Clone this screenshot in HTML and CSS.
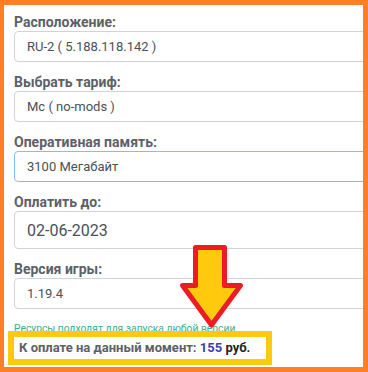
FILE: index.html
```html
<!DOCTYPE html>
<html>
<head>
  <title>Аренда сервера</title>
  <link rel="stylesheet" href="styles.css">
</head>
<body>
  <div class="frame">
    <!-- Server order form -->
    <div class="field">
      <label class="field-label">Расположение:</label>
      <input class="field-input" type="text" value="RU-2 ( 5.188.118.142 )" readonly>
    </div>

    <div class="field">
      <label class="field-label">Выбрать тариф:</label>
      <input class="field-input" type="text" value="Mc ( no-mods )" readonly>
    </div>

    <div class="field">
      <label class="field-label">Оперативная память:</label>
      <input class="field-input focused" type="text" value="3100 Мегабайт" readonly>
    </div>

    <div class="field">
      <label class="field-label">Оплатить до:</label>
      <input class="field-input large" type="text" value="02-06-2023" readonly>
    </div>

    <div class="field">
      <label class="field-label">Версия игры:</label>
      <input class="field-input" type="text" value="1.19.4" readonly>
    </div>

    <div class="help-text">Ресурсы подходят для запуска любой версии</div>

    <!-- Highlighted total -->
    <div class="total">К оплате на данный момент: <span class="price">155</span> <span class="currency">руб.</span></div>

    <!-- Annotation arrow -->
    <svg class="arrow" width="368" height="372" viewBox="0 0 368 372">
      <polygon points="195.5,247.5 224.5,247.5 224.5,285.5 240.5,285.5 211.5,325 182.5,285.5 195.5,285.5"
               fill="#ffc90e" stroke="#ed1c24" stroke-width="5" stroke-linejoin="round"/>
    </svg>
  </div>
</body>
</html>
```

FILE: styles.css
```css
body {
  margin: 0;
  font-family: Roboto, "Noto Sans", sans-serif;
}
/* Orange frame around the screenshot */
.frame {
  position: relative;
  box-sizing: border-box;
  width: 368px;
  height: 372px;
  border-style: solid;
  border-color: #ff7f27;
  border-width: 5px 5px 5px 4px;
  background-color: #fff;
  padding: 9px 0 0 10px;
  overflow: hidden;
}
.field {
  margin-bottom: 12px;
}
.field-label {
  display: block;
  font-size: 14px;
  font-weight: 700;
  line-height: 17px;
  color: #5c6166;
}
.field-input {
  display: block;
  box-sizing: border-box;
  width: 420px;
  height: 31px;
  padding: 0 12px;
  border: 1px solid #ced4da;
  border-radius: 4px;
  font-family: Roboto, "Noto Sans", sans-serif;
  font-size: 13px;
  color: #495057;
  outline: none;
}
.field-input.focused {
  border-color: #80bdff;
}
.field-input.large {
  height: 38px;
  font-size: 16px;
}
.help-text {
  font-size: 10.3px;
  line-height: 16px;
  color: #3fae8a;
}
/* Yellow highlight box */
.total {
  position: relative;
  display: inline-block;
  margin: -7px 0 0 -6px;
  padding: 3px 16px 3px 5px;
  border: 6px solid #ffc90e;
  font-size: 13px;
  font-weight: 700;
  line-height: 16px;
  color: #5c6166;
  background-color: #fff;
}
.total .price {
  color: #3f3fa8;
}
.total .currency {
  color: #212529;
}
.arrow {
  position: absolute;
  top: -5px;
  left: -4px;
  pointer-events: none;
}
```
